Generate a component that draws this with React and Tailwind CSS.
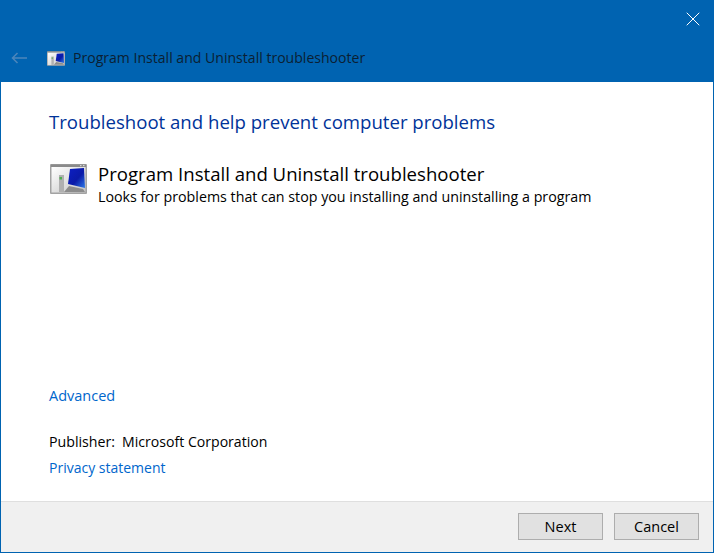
import React from 'react'
import { X } from 'lucide-react'

function ProgramIcon({ width, height }) {
  return (
    <svg width={width} height={height} viewBox="0 0 37 30" className="shrink-0">
      <defs>
        <linearGradient id="pane" x1="0" y1="0" x2="1" y2="1">
          <stop offset="0" stopColor="#ffffff" />
          <stop offset="1" stopColor="#c4c4c4" />
        </linearGradient>
        <linearGradient id="screen" x1="0" y1="0" x2="1" y2="1">
          <stop offset="0" stopColor="#0c1fc4" />
          <stop offset="0.55" stopColor="#0a1aa8" />
          <stop offset="1" stopColor="#2f7be8" />
        </linearGradient>
      </defs>
      <rect width="37" height="30" rx="1" fill="#a3a3a3" />
      <rect x="1" y="0.5" width="35" height="2.5" fill="#8a8a8a" />
      <rect x="1.5" y="3" width="34" height="25.5" fill="url(#pane)" />
      <rect x="30" y="1" width="1.5" height="1.2" fill="#d8d8d8" />
      <rect x="33" y="1" width="1.5" height="1.2" fill="#d8d8d8" />
      <rect x="9" y="11" width="5" height="17" fill="#b0b0b0" />
      <rect x="9.5" y="13" width="2.5" height="2.5" fill="#4fae4f" />
      <path d="M14 28 L19 22 L33 25 L35 28 Z" fill="#8c8c8c" />
      <path d="M20 5 L34 4 L35 24 L18 20 Z" fill="url(#screen)" />
    </svg>
  )
}

export default function App() {
  return (
    <div className="w-[714px] h-[553px] flex flex-col border border-[#0063b1] bg-white font-['Open_Sans','Noto_Sans',sans-serif] text-[14.2px] text-black overflow-hidden">
      <header className="h-[81px] shrink-0 flex flex-col bg-[#0063b1]">
        <div className="flex justify-end pt-[6px] pr-[8px]">
          <X size={24} strokeWidth={1} className="text-white" />
        </div>
        <div className="flex items-center mt-[17px]">
          <svg width="16" height="12" viewBox="0 0 16 12" className="ml-[10px] mr-[20px]" fill="none" stroke="#4c86bb" strokeWidth="1.5">
            <path d="M16 6H1.5M6.5 1L1.5 6l5 5" />
          </svg>
          <ProgramIcon width={18} height={15} />
          <span className="ml-[8px] text-[14.07px] text-[#0b1f33] leading-5">Program Install and Uninstall troubleshooter</span>
        </div>
      </header>

      <main className="flex-1 flex flex-col pl-[48px]">
        <h1 className="mt-[26px] text-[18.6px] leading-7 text-[#003399]">Troubleshoot and help prevent computer problems</h1>
        <div className="flex mt-[26px]">
          <div className="pt-[2px] pl-px"><ProgramIcon width={37} height={30} /></div>
          <div className="ml-[11px]">
            <div className="text-[18.6px] leading-6">Program Install and Uninstall troubleshooter</div>
            <div className="mt-px text-[14.25px] leading-5">Looks for problems that can stop you installing and uninstalling a program</div>
          </div>
        </div>
        <a className="mt-auto text-[14.5px] text-[#0066cc] leading-5">Advanced</a>
        <div className="mt-[26px] flex leading-5">
          <span>Publisher:</span>
          <span className="ml-[7px] text-[14.1px]">Microsoft Corporation</span>
        </div>
        <a className="mt-[6px] mb-[23px] text-[14px] text-[#0066cc] leading-5">Privacy statement</a>
      </main>

      <footer className="h-[51px] shrink-0 flex justify-end items-start gap-[11px] pt-[11px] pr-[14px] bg-[#f0f0f0] border-t border-[#dfdfdf]">
        <button className="w-[85px] h-[27px] text-[14.5px] bg-[#e1e1e1] border border-[#adadad]">Next</button>
        <button className="w-[85px] h-[27px] text-[14.5px] bg-[#e1e1e1] border border-[#adadad]">Cancel</button>
      </footer>
    </div>
  )
}
